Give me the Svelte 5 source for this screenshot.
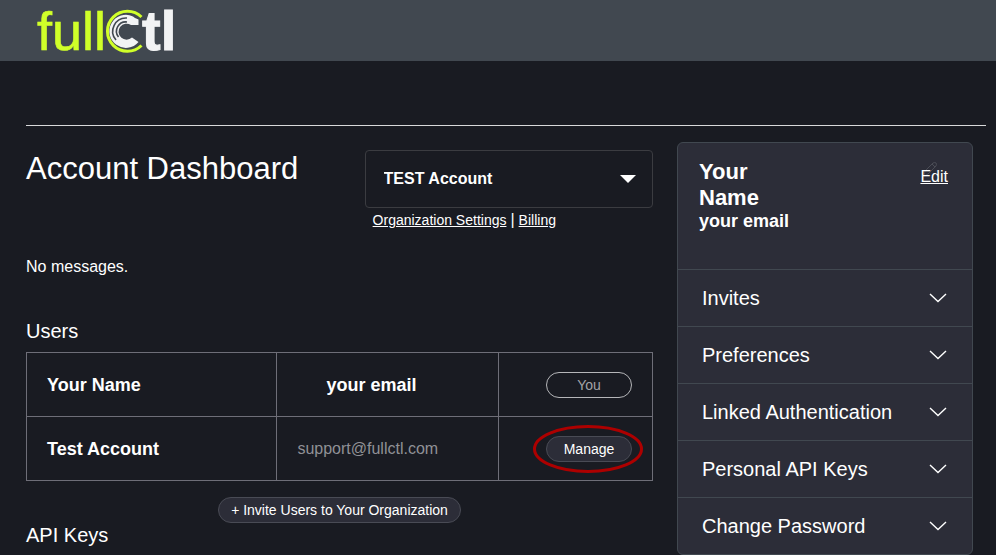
<script>
  const users = [
    { name: 'Your Name', email: 'your email', you: true },
    { name: 'Test Account', email: 'support@fullctl.com', you: false }
  ];
  const sections = ['Invites', 'Preferences', 'Linked Authentication', 'Personal API Keys', 'Change Password'];
</script>

<div class="page">
  <header>
    <a class="logo" href="#home" aria-label="fullctl">
      <svg width="150" height="61" viewBox="30 0 150 61" aria-hidden="true">
        <text class="full" x="37" y="50">full</text>
        <path d="M141.5 17A20 20 0 1 0 141.5 45.5" fill="none" stroke="#d0ff29" stroke-width="3" />
        <path d="M138.5 19.5V25H131A8 8 0 1 0 132 37.5L138.5 42A16.5 16.5 0 1 1 133 16.5L135 18z" fill="#f2f3f4" />
        <path d="M127 18A13.3 13.3 0 0 0 116 40M127 22A9.3 9.3 0 0 0 118.5 37" fill="none" stroke="#414850" stroke-width="1.6" />
        <text class="tl" x="142" y="50">tl</text>
      </svg>
    </a>
  </header>

  <div class="body">
    <hr />
    <div class="columns">
      <main>
        <div class="top">
          <h1>Account Dashboard</h1>
          <div class="org">
            <div class="picker">
              <select aria-label="Account">
                <option>TEST Account</option>
              </select>
              <svg width="16" height="8" viewBox="0 0 16 8" aria-hidden="true"><path d="M0 0h16L8 8z" fill="#fff" /></svg>
            </div>
            <nav><a href="#settings">Organization Settings</a><span>|</span><a href="#billing">Billing</a></nav>
          </div>
        </div>
        <p class="messages">No messages.</p>
        <h2>Users</h2>
        <table>
          <tbody>
            {#each users as user}
              <tr>
                <th scope="row">{user.name}</th>
                <td class="email" class:own={user.you}>{user.email}</td>
                <td class="action">
                  {#if user.you}
                    <button class="pill you" disabled>You</button>
                  {:else}
                    <span class="marked">
                      <button class="pill">Manage</button>
                      <svg class="ring" width="112" height="50" viewBox="0 0 112 50" aria-hidden="true">
                        <ellipse cx="56" cy="25" rx="53.5" ry="22.5" fill="none" stroke="#ad0000" stroke-width="3" />
                      </svg>
                    </span>
                  {/if}
                </td>
              </tr>
            {/each}
          </tbody>
        </table>
        <div class="invite"><button class="pill wide">+ Invite Users to Your Organization</button></div>
        <h2>API Keys</h2>
      </main>

      <aside>
        <div class="profile">
          <div class="who">
            <strong>Your Name</strong>
            <b>your email</b>
          </div>
          <a class="edit" href="#edit">
            <svg width="18" height="18" viewBox="0 0 18 18" aria-hidden="true"><path d="M2 15l1-5 8-8q2-1 3 0 1 1 0 3l-8 8zM10 3l3 3" fill="none" stroke="#4a4c55" /></svg>
            <span>Edit</span>
          </a>
        </div>
        {#each sections as section}
          <button class="section">
            {section}
            <svg width="18" height="10" viewBox="0 0 18 10" aria-hidden="true"><path d="M1 1l8 7.5L17 1" fill="none" stroke="#fff" stroke-width="1.4" /></svg>
          </button>
        {/each}
      </aside>
    </div>
  </div>
</div>

<style>
  :global(body) { margin: 0; background: #191b22; }
  .page { color: #fff; font: 16px/24px "Liberation Sans", Arial, sans-serif; }
  .page * { box-sizing: border-box; }
  button, select { font: inherit; color: inherit; }
  a { color: inherit; }
  header { height: 61px; padding-left: 30px; background: #414850; }
  .logo, .logo svg { display: block; width: 150px; }
  .full { font: 54px "Liberation Sans", sans-serif; fill: #d0ff29; stroke: #d0ff29; stroke-width: 0.6; }
  .tl { font: bold 56px "Liberation Sans", sans-serif; fill: #f2f3f4; stroke: #f2f3f4; stroke-width: 1; }
  .body { padding: 64px 10px 0 26px; }
  hr { margin: 0; border: 0; border-top: 1px solid #d8d9da; }
  .columns { display: flex; align-items: flex-start; gap: 24px; padding: 16px 13px 0 0; }
  main { flex: 1; min-width: 0; padding-top: 8px; }
  .top { display: flex; justify-content: space-between; height: 105px; }
  h1 { margin: 0; font-weight: 400; font-size: 31px; line-height: 38px; }
  .org { width: 46%; }
  .picker { position: relative; }
  select { display: block; width: 100%; height: 58px; padding: 0 18px; appearance: none; background: transparent; border: 1px solid #3b3c41; border-radius: 4px; font-weight: 700; }
  .picker svg { position: absolute; right: 17px; top: 25px; pointer-events: none; }
  nav { display: flex; gap: 4px; padding-left: 8px; font-size: 14px; }
  nav span { font-size: 16px; }
  .messages { margin: 0 0 40px; }
  h2 { margin: 0; font-weight: 400; font-size: 20px; line-height: 24px; }
  .messages + h2 { margin-bottom: 9px; }
  table { width: 100%; border-collapse: collapse; table-layout: fixed; }
  th, td { height: 64px; padding: 0 20px; border: 1px solid #6e6e78; text-align: left; }
  th { width: 40%; font-size: 18px; }
  .email { color: #909196; }
  .email.own { padding-left: 49px; color: #fff; font-weight: 700; font-size: 18px; }
  .action { width: 154px; text-align: right; }
  .pill { display: inline-block; width: 86px; height: 26px; padding: 0; border: 1px solid #494b55; border-radius: 13px; background: #2c2d38; font-size: 14px; line-height: 24px; vertical-align: middle; }
  .you { background: transparent; border-color: #b5b6b9; color: #a2a3a7; }
  .marked { position: relative; display: inline-block; }
  .ring { position: absolute; left: -14px; top: -12px; pointer-events: none; }
  .invite { margin-top: 16px; text-align: center; }
  .wide { width: auto; padding: 0 12px; }
  aside { width: 296px; border: 1px solid #414850; border-radius: 6px; background: #2c2d38; }
  .profile { display: flex; justify-content: space-between; height: 126px; padding: 16px 24px 0 21px; }
  .who { width: 120px; }
  .who strong { display: block; width: 80px; font-size: 22px; line-height: 26px; }
  .who b { display: block; font-size: 18px; line-height: 20px; }
  .edit { position: relative; align-self: flex-start; margin-top: 6px; }
  .edit span { position: relative; }
  .edit svg { position: absolute; left: 2px; top: -4px; }
  .section { display: flex; align-items: center; justify-content: space-between; width: 100%; height: 57px; padding: 0 25px 0 24px; border: 0; border-top: 1px solid #414850; background: transparent; font-size: 20px; text-align: left; }
</style>
